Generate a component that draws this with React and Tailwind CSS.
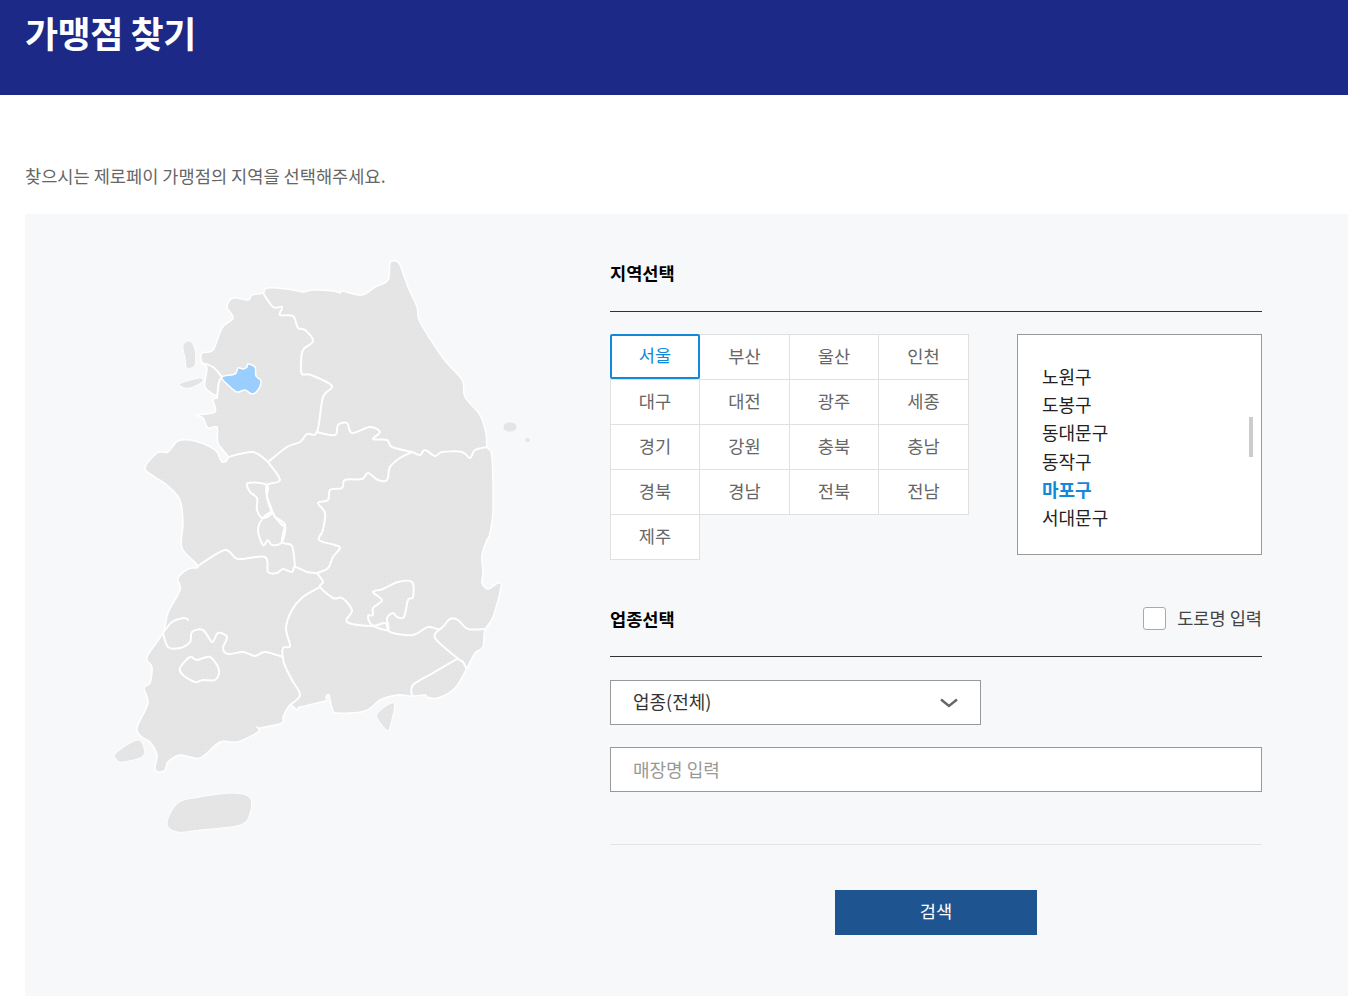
import React from 'react';

// map coordinates are page pixels, the svg viewBox starts at the panel corner
// catmull-rom so the curve still goes through every traced point
const smooth = (pts, closed) => {
    const n = pts.length;
    const at = i => (closed ? pts[(i + n) % n] : pts[Math.max(0, Math.min(n - 1, i))]);
    let d = `M${pts[0][0]} ${pts[0][1]}`;
    const end = closed ? n : n - 1;
    for (let i = 0; i < end; i++) {
        const p0 = at(i - 1), p1 = at(i), p2 = at(i + 1), p3 = at(i + 2);
        const c1 = [p1[0] + (p2[0] - p0[0]) / 6, p1[1] + (p2[1] - p0[1]) / 6];
        const c2 = [p2[0] - (p3[0] - p1[0]) / 6, p2[1] - (p3[1] - p1[1]) / 6];
        d += ` C${c1[0]} ${c1[1]} ${c2[0]} ${c2[1]} ${p2[0]} ${p2[1]}`;
    }
    return closed ? d + 'Z' : d;
};

const mainland = [
    [227, 307], [233, 298], [248, 300], [252, 295], [263, 293], [267, 288], [287, 289], [303, 292], [313, 290], [333, 291],
    [340, 293], [342, 291], [362, 295], [375, 287], [388, 280], [390, 263], [395, 261], [400, 265], [408, 287], [417, 307],
    [420, 322], [443, 358], [462, 380], [465, 397], [480, 415], [486, 433], [487, 447], [492, 457], [493, 510], [490, 533],
    [487, 540], [482, 555], [483, 573], [482, 583], [488, 589], [498, 583], [501, 587], [493, 617], [485, 630], [483, 647],
    [475, 653], [467, 668], [455, 688], [438, 698], [427, 697], [425, 695], [412, 696], [397, 695], [380, 700], [365, 711],
    [337, 713], [332, 708], [329, 695], [326, 697], [325, 701], [300, 707], [297, 710], [290, 705], [283, 717], [282, 723],
    [260, 728], [257, 727], [258, 732], [237, 742], [220, 742], [200, 758], [180, 755], [168, 762], [165, 770], [158, 772],
    [155, 767], [157, 755], [150, 742], [142, 737], [137, 728], [148, 703], [144, 688], [150, 683], [152, 667], [147, 657],
    [163, 633], [168, 613], [180, 590], [178, 578], [188, 569], [198, 566], [182, 548], [183, 523], [180, 500], [168, 486],
    [155, 477], [145, 468], [157, 453], [168, 452], [178, 441], [195, 441], [215, 450], [222, 462], [228, 457], [218, 443],
    [217, 427], [208, 428], [203, 418], [197, 415], [215, 412], [213, 400], [217, 397], [205, 387], [207, 368], [202, 363],
    [202, 353], [213, 350], [222, 328], [233, 318],
];

const islands = [
    [[167, 823], [178, 803], [200, 797], [233, 793], [250, 798], [250, 813], [240, 825], [200, 830], [177, 832]],
    [[116, 753], [137, 740], [144, 748], [142, 757], [123, 762], [117, 760]],
    [[377, 714], [394, 703], [390, 727], [387, 730], [382, 725]],
    [[183, 345], [190, 341], [195, 350], [195, 365], [187, 368], [185, 358]],
    [[181, 383], [200, 378], [202, 382], [190, 388], [182, 387]],
];

const seoul = [
    [222, 377], [235, 374], [238, 368], [243, 369], [247, 367], [248, 364], [255, 367], [256, 376], [261, 381], [258, 390], [252, 394],
    [245, 390], [237, 392], [228, 385],
];

const borders = [
    // gyeonggi / gangwon
    [[263, 293], [273, 307], [282, 307], [280, 315], [293, 316], [298, 328], [305, 330], [313, 341], [303, 350], [301, 363], [302, 374], [311, 375], [332, 386], [323, 397], [317, 432], [307, 434], [300, 442], [287, 447], [268, 462]],
    // gyeonggi south
    [[268, 462], [253, 452], [228, 457]],
    // incheon
    [[202, 363], [213, 367], [222, 377]],
    [[222, 377], [219, 382], [217, 397]],
    // gangwon / gyeongbuk
    [[317, 432], [335, 435], [338, 425], [347, 423], [352, 433], [370, 427], [380, 432], [373, 439], [387, 440], [392, 447], [412, 452], [420, 455], [425, 450], [435, 456], [442, 452], [462, 452], [470, 458], [475, 450], [487, 447]],
    // chungbuk / gyeongbuk
    [[412, 452], [400, 458], [390, 467], [387, 480], [378, 480], [368, 473], [362, 479], [345, 480], [342, 488], [330, 490], [328, 500], [318, 503], [325, 513], [323, 530], [319, 540], [335, 545], [340, 548], [333, 557], [328, 568], [317, 573]],
    // gyeongbuk / gyeongnam
    [[317, 573], [323, 582], [320, 587], [333, 598], [342, 598], [352, 610], [347, 622], [372, 626], [385, 623], [388, 630], [393, 633], [413, 635], [428, 627], [440, 629], [450, 619], [458, 620], [468, 629], [485, 629]],
    // ulsan, busan
    [[440, 629], [435, 638], [457, 658], [463, 662], [466, 668]],
    [[457, 659], [433, 673], [413, 685], [412, 696]],
    // chungbuk / chungnam, sejong, daejeon
    [[268, 462], [280, 480], [267, 485], [267, 497], [272, 512], [282, 525], [285, 525], [282, 542], [292, 546], [295, 567]],
    // chungnam / jeonbuk
    [[198, 566], [225, 550], [238, 559], [265, 557], [268, 572], [277, 573], [283, 569], [292, 572], [295, 567], [307, 572], [317, 573]],
    // jeonbuk / gyeongnam
    [[320, 587], [303, 597], [292, 610], [286, 628], [290, 646], [283, 648], [284, 663], [292, 680], [300, 695], [290, 705]],
    // jeonbuk / jeonnam
    [[163, 633], [168, 647], [180, 648], [190, 642], [192, 632], [203, 630], [212, 642], [218, 633], [227, 637], [223, 648], [228, 654], [243, 652], [255, 656], [265, 652], [283, 657]],
    // inlet
    [[163, 633], [172, 622], [184, 618], [188, 620]],
];

const loops = [
    // sejong
    [[267, 485], [248, 483], [250, 492], [257, 498], [257, 510], [263, 518], [272, 512], [267, 497]],
    // daejeon
    [[263, 518], [258, 530], [263, 545], [268, 540], [272, 545], [282, 542], [285, 525], [275, 517], [272, 512]],
    // daegu
    [[372, 625], [368, 616], [373, 615], [373, 608], [382, 600], [373, 592], [383, 589], [398, 582], [412, 582], [413, 597], [408, 600], [404, 617], [397, 617], [393, 613], [387, 618], [388, 630]],
    // gwangju
    [[180, 668], [190, 657], [197, 660], [210, 657], [219, 670], [215, 680], [203, 680], [195, 682], [183, 675]],
];

const KoreaMap = () => (
    <svg viewBox="25 214 585 782" className="w-[585px] h-[782px] shrink-0">
        <defs>
            <pattern id="dots" width="4" height="4" patternUnits="userSpaceOnUse">
                <rect width="4" height="4" fill="#e5e5e5" />
                <rect width="1" height="1" fill="#e1e1e1" />
            </pattern>
        </defs>
        <g fill="url(#dots)" stroke="#ffffff" strokeWidth="1.5" strokeLinejoin="round">
            <path d={smooth(mainland, true)} />
            {islands.map((pts, i) => (
                <path key={i} d={smooth(pts, true)} strokeWidth="1" />
            ))}
            <ellipse cx="510" cy="427" rx="7" ry="5" strokeWidth="0.5" />
            <circle cx="527.5" cy="440" r="2.5" strokeWidth="0.5" />
        </g>
        <g fill="none" stroke="#ffffff" strokeWidth="2" strokeLinejoin="round" strokeLinecap="round">
            {borders.map((pts, i) => (
                <path key={i} d={smooth(pts, false)} />
            ))}
            {loops.map((pts, i) => (
                <path key={i} d={smooth(pts, true)} />
            ))}
        </g>
        <path d={smooth(seoul, true)} fill="#99ceff" stroke="#ffffff" strokeWidth="1.5" />
    </svg>
);

const regions = ['서울', '부산', '울산', '인천', '대구', '대전', '광주', '세종', '경기', '강원', '충북', '충남', '경북', '경남', '전북', '전남', '제주'];
const districts = ['노원구', '도봉구', '동대문구', '동작구', '마포구', '서대문구'];

const App = () => {
    return (
        <div className="font-['Noto_Sans_CJK_KR','Noto_Sans',sans-serif] bg-white h-[996px] overflow-hidden">
            <div className="h-[95px] bg-[#1c2987] pl-[25px] pt-[6px]">
                <h1 className="text-[36px] leading-[52px] font-bold text-white tracking-[-0.5px]">가맹점 찾기</h1>
            </div>

            <p className="pl-[25px] pt-[68px] h-[119px] text-[17.6px] leading-[25px] text-[#666]">
                찾으시는 제로페이 가맹점의 지역을 선택해주세요.
            </p>

            <div className="ml-[25px] h-[782px] bg-[#f7f8fa] flex">
                <KoreaMap />

                <div className="w-[652px] shrink-0">
                    {/* 지역선택 */}
                    <div className="h-[98px] pt-[46px] border-b border-[#333]">
                        <h2 className="text-[17.6px] leading-[26px] font-bold text-black">지역선택</h2>
                    </div>

                    <div className="flex justify-between mt-[22px] h-[226px]">
                        <div className="grid grid-cols-[89px_90px_89px_90px] auto-rows-[45px] w-[359px] h-[225px] pl-px pt-px">
                            {regions.map((name, i) => (
                                <button
                                    key={name}
                                    className={
                                        i === 0
                                            ? "relative z-10 -ml-px -mt-px h-[45px] pb-[2px] bg-white border-2 border-[#1488d8] rounded-[2px] text-[17.6px] text-[#1488d8]"
                                            : "-ml-px -mt-px h-[46px] pb-[1px] bg-white border border-[#e0e0e0] text-[17.6px] text-[#666]"
                                    }
                                >
                                    {name}
                                </button>
                            ))}
                        </div>

                        <div className="relative w-[245px] h-[221px] bg-white border border-[#999] pl-[24px] pt-[28px]">
                            {districts.map(d => (
                                <div
                                    key={d}
                                    className={
                                        d === '마포구'
                                            ? "h-[28.2px] leading-[27px] text-[18px] font-bold text-[#1488d8]"
                                            : "h-[28.2px] leading-[27px] text-[18px] text-[#222]"
                                    }
                                >
                                    {d}
                                </div>
                            ))}
                            <div className="absolute top-[82px] right-[8px] w-[4px] h-[40px] bg-[#ccc]"></div>
                        </div>
                    </div>

                    {/* 업종선택 */}
                    <div className="h-[97px] border-b border-[#333] flex justify-between pt-[46px]">
                        <h2 className="text-[17.6px] leading-[26px] font-bold text-black">업종선택</h2>
                        <label className="flex gap-[11px] h-[24px] pt-px">
                            <span className="w-[23px] h-[23px] bg-white border border-[#aaa] rounded-[3px]"></span>
                            <span className="text-[17.6px] leading-[22px] text-[#444]">도로명 입력</span>
                        </label>
                    </div>

                    <div className="mt-[23px] w-[371px] h-[45px] bg-white border border-[#999] flex items-center justify-between pl-[22px] pr-[22px]">
                        <span className="text-[18px] text-[#333] pb-[2px]">업종(전체)</span>
                        <svg width="18" height="10" viewBox="0 0 18 10" fill="none">
                            <path d="M1 1.5 L9 8 L17 1.5" stroke="#666" strokeWidth="2.4" />
                        </svg>
                    </div>

                    <input
                        placeholder="매장명 입력"
                        className="block mt-[22px] w-full h-[45px] bg-white border border-[#999] pl-[22px] pb-[2px] text-[18px] outline-none placeholder:text-[#999]"
                    />

                    <div className="mt-[52px] border-t border-[#e4e4e4]"></div>

                    <div className="flex justify-center mt-[45px]">
                        <button className="w-[202px] h-[45px] pb-[3px] bg-[#1e5591] text-white text-[17.6px]">검색</button>
                    </div>
                </div>
            </div>
        </div>
    );
};

export default App;
